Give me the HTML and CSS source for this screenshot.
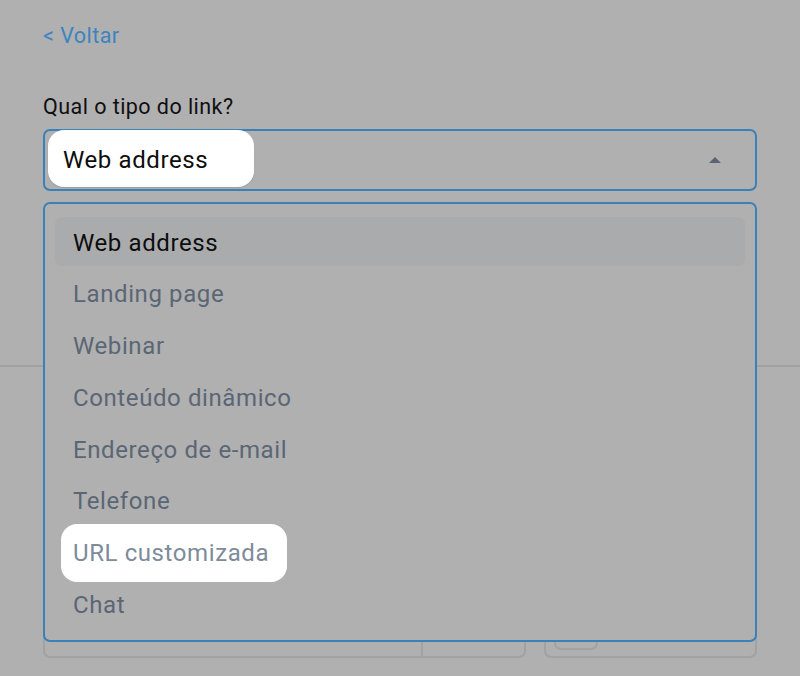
FILE: index.html
```html
<!DOCTYPE html>
<html>
<head>
    <title>Tipo do link</title>
    <link rel="stylesheet" href="styles.css">
</head>
<body>
    <div class="page">
        <a class="back" href="#">&lt; Voltar</a>

        <div class="field">
            <label class="label">Qual o tipo do link?</label>
            <div class="select-wrap">
                <div class="select">
                    <span class="spot spot-value">Web address</span>
                    <span class="caret"></span>
                </div>

                <ul class="menu">
                    <li class="item active">Web address</li>
                    <li class="item">Landing page</li>
                    <li class="item">Webinar</li>
                    <li class="item">Conteúdo dinâmico</li>
                    <li class="item">Endereço de e-mail</li>
                    <li class="item">Telefone</li>
                    <li class="item"><span class="spot spot-item">URL customizada</span></li>
                    <li class="item">Chat</li>
                </ul>
            </div>
        </div>
    </div>

    <div class="divider"></div>

    <div class="page bottom-row">
        <div class="box box-split">
            <div class="box-main"></div>
            <div class="box-side"></div>
        </div>
        <div class="box box-right">
            <div class="box-chip"></div>
        </div>
    </div>
</body>
</html>
```

FILE: styles.css
```css
body {
    margin: 0;
    background: #b0b0b0;
    font-family: Roboto, "Liberation Sans", sans-serif;
    font-size: 24px;
    letter-spacing: 0.6px;
    color: #0f0f10;
}
.page {
    padding: 0 43px;
}
.back {
    display: block;
    padding-top: 23px;
    line-height: 26px;
    font-size: 21.5px;
    letter-spacing: 0.45px;
    color: #3d84bf;
    text-decoration: none;
}
.field {
    margin-top: 45px;
}
.label {
    display: block;
    line-height: 26px;
    font-size: 21.5px;
    letter-spacing: 0.45px;
    margin-bottom: 9px;
}
.select-wrap {
    position: relative;
}
.select {
    display: flex;
    align-items: center;
    height: 58px;
    border: 2px solid #3b80b6;
    border-radius: 7px;
    padding-left: 3px;
}
.spot {
    display: flex;
    align-items: center;
    box-sizing: border-box;
    background: #ffffff;
    border-radius: 16px;
}
.spot-value {
    align-self: flex-start;
    margin-top: -1px;
    width: 206px;
    height: 57px;
    padding-left: 15px;
    padding-top: 3px;
    color: #0d0d0d;
    box-shadow: 0 1px 1px rgba(0, 0, 0, 0.12);
}
.caret {
    margin-left: auto;
    margin-right: 34px;
    width: 0;
    height: 0;
    border-left: 6.5px solid transparent;
    border-right: 6.5px solid transparent;
    border-bottom: 6px solid #5a6472;
}
.menu {
    position: absolute;
    top: 73px;
    left: 0;
    right: 0;
    z-index: 2;
    margin: 0;
    list-style: none;
    display: flex;
    flex-direction: column;
    gap: 2.8px;
    padding: 13px 10px 11px;
    border: 2px solid #3b80b6;
    border-radius: 7px;
    background: #b0b0b0;
}
.item {
    display: flex;
    align-items: center;
    height: 49px;
    padding-left: 18px;
    padding-top: 2px;
    box-sizing: border-box;
    border-radius: 7px;
    color: #5b6675;
}
.item.active {
    background: #aaabad;
    color: #0d0d0d;
}
.spot-item {
    width: 226px;
    height: 58px;
    margin-left: -12px;
    padding-left: 12px;
    color: #7d8b9a;
}
.divider {
    margin-top: 174px;
    height: 2px;
    background: #a2a2a2;
}
.bottom-row {
    display: flex;
    gap: 18px;
    margin-top: 235px;
}
.box {
    height: 56px;
    box-sizing: border-box;
    border: 2px solid #a2a2a2;
    border-radius: 7px;
}
.box-split {
    width: 483px;
    display: flex;
}
.box-main {
    width: 376px;
    border-right: 2px solid #a2a2a2;
}
.box-right {
    flex: 1;
    padding-left: 8px;
}
.box-chip {
    width: 44px;
    height: 46px;
    box-sizing: border-box;
    border: 2px solid #a2a2a2;
    border-top: none;
    border-radius: 0 0 7px 7px;
}
```
